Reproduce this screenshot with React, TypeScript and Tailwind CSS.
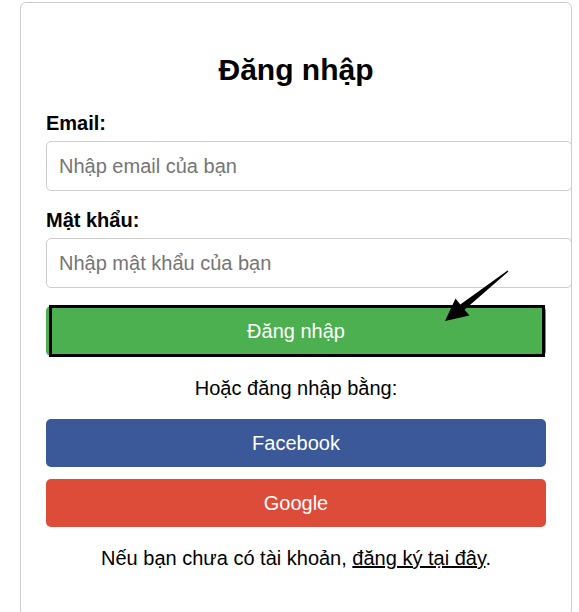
import React from "react";

const font = "font-['Liberation_Sans',Arial,Helvetica,sans-serif]";

function Field({ label, placeholder, type }: { label: string; placeholder: string; type: string }) {
  return (
    <div className="mb-[18px]">
      <label className="mb-[6px] block text-[20px] leading-[23px] font-bold text-black">{label}</label>
      <input
        type={type}
        placeholder={placeholder}
        className="box-border h-[50px] w-[526px] rounded-[5px] border border-[#cccccc] bg-white px-[12px] text-[20px] text-black placeholder:text-[#757575] outline-none"
      />
    </div>
  );
}

export default function App() {
  return (
    <div className={`relative h-[612px] w-[579px] overflow-hidden bg-white ${font}`}>
      <div className="ml-[20px] mt-[2px] w-[552px] rounded-[6px] border border-[#cccccc] px-[25px] pt-[25px] pb-[25px]">
        <h2 className="mt-[25px] mb-[25px] text-center text-[30px] leading-[34px] font-bold text-black">Đăng nhập</h2>

        <Field label="Email:" placeholder="Nhập email của bạn" type="email" />
        <Field label="Mật khẩu:" placeholder="Nhập mật khẩu của bạn" type="password" />

        <div className="relative">
          <button className="h-[50px] w-full rounded-[5px] bg-[#4caf50] text-[20px] text-white">Đăng nhập</button>
          <div className="pointer-events-none absolute left-[3px] right-[1px] top-[-1px] bottom-[-1px] border-[3px] border-black" />
        </div>

        <p className="mt-[21px] mb-[19px] text-center text-[20px] leading-[23px] text-black">Hoặc đăng nhập bằng:</p>

        <button className="mb-[12px] block h-[48px] w-full rounded-[5px] bg-[#3b5998] text-[20px] text-white">Facebook</button>
        <button className="block h-[48px] w-full rounded-[5px] bg-[#dd4b39] text-[20px] text-white">Google</button>

        <p className="mt-[20px] mb-[20px] text-center text-[20px] leading-[23px] text-black">
          Nếu bạn chưa có tài khoản, <a href="#" className="text-black underline">đăng ký tại đây</a>.
        </p>
      </div>

      <svg className="pointer-events-none absolute left-0 top-0" width="579" height="612" viewBox="0 0 579 612">
        <polygon
          points="508.4,271.6 464.5,309.8 469.5,315.5 445,321 455.5,298.5 460.3,304.6 507.6,270.6"
          fill="#000"
        />
      </svg>
    </div>
  );
}
